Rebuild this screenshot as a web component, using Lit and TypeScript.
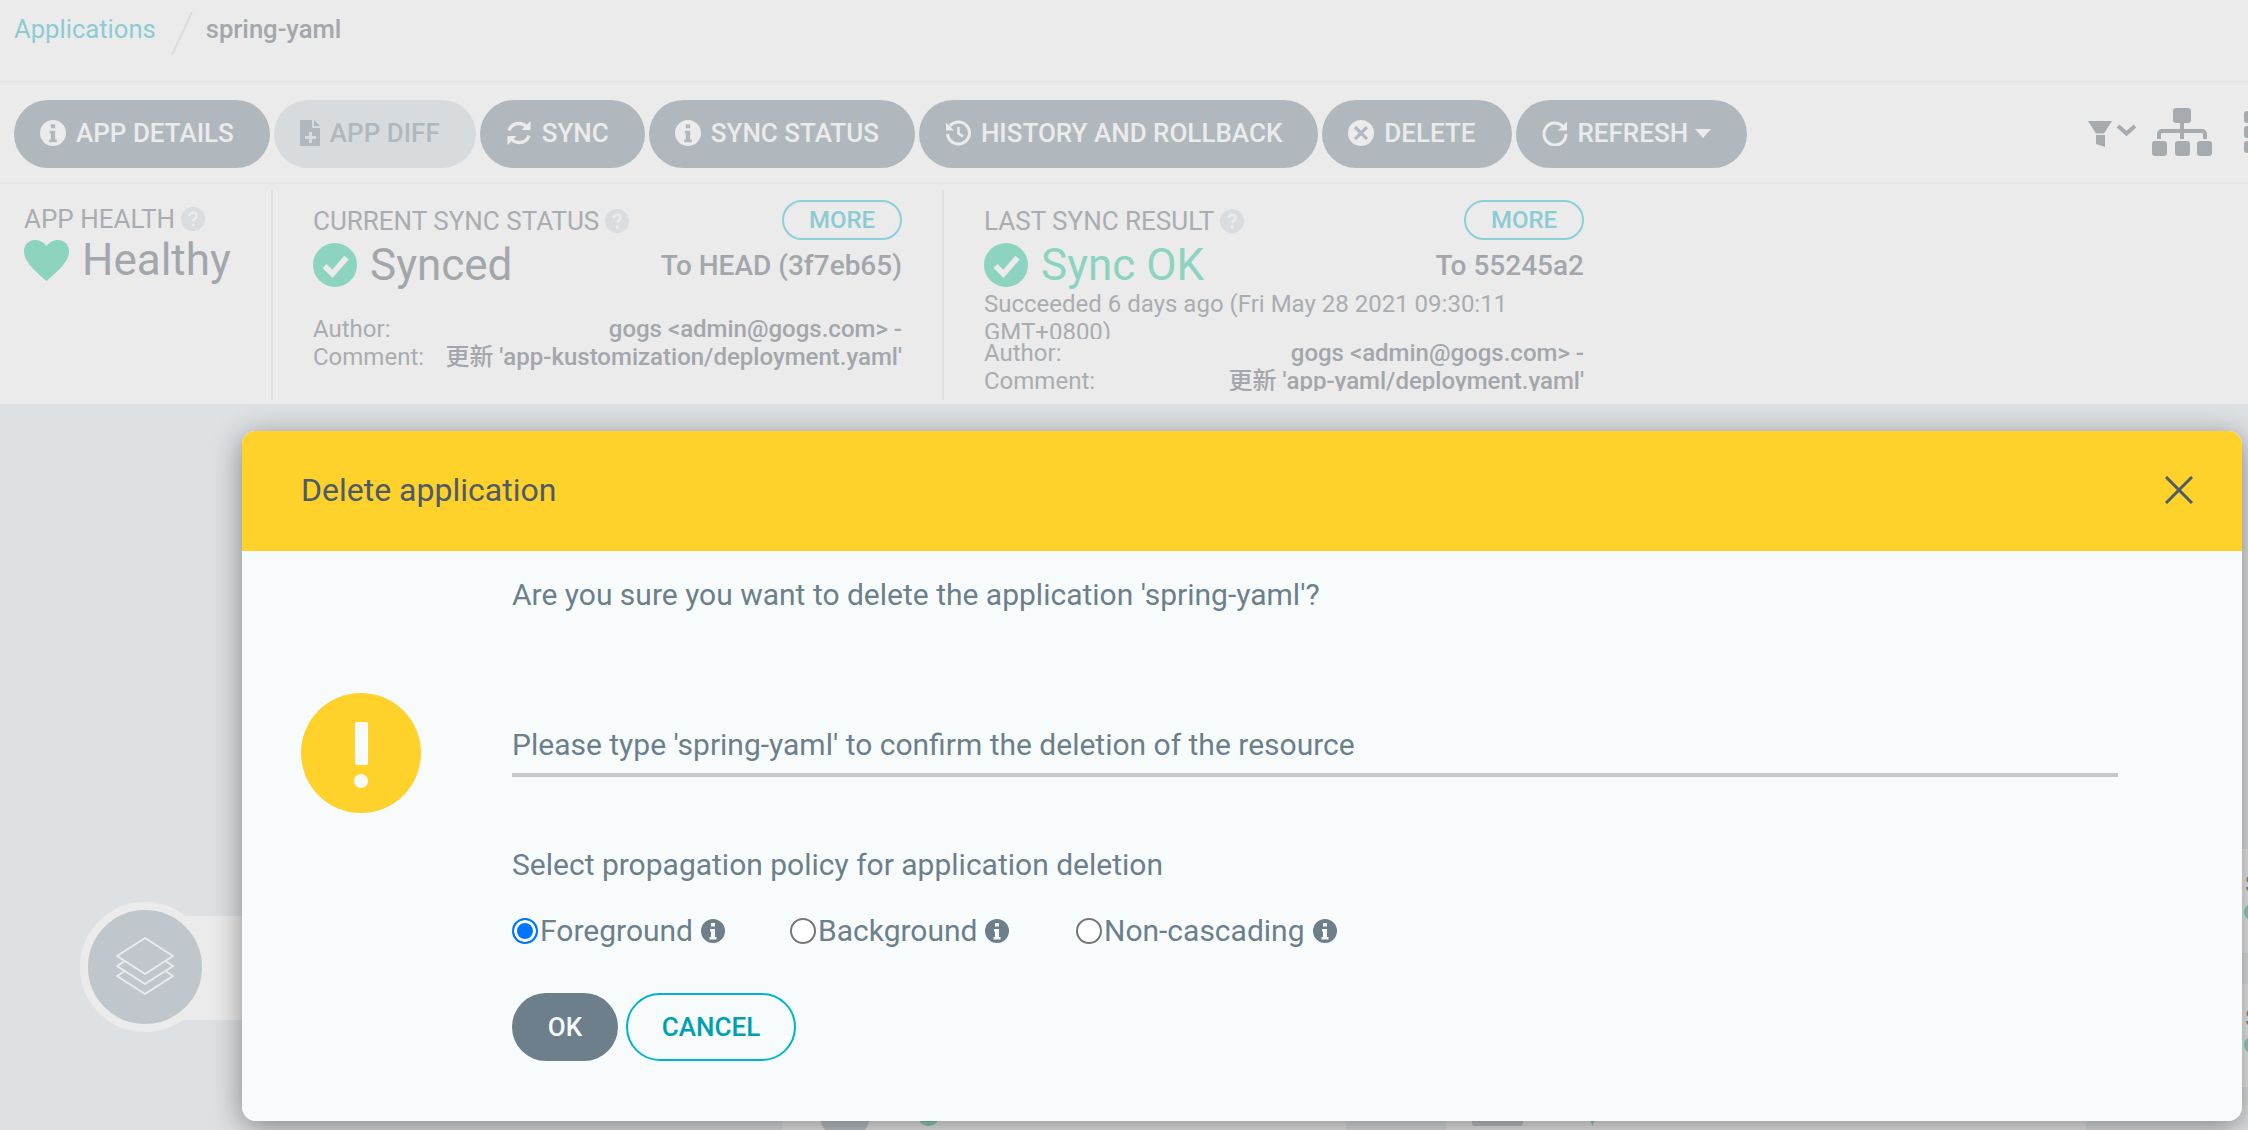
import { LitElement, html, css } from "lit";
import { customElement } from "lit/decorators.js";

const infoPath =
  "M12 0a12 12 0 1 0 0 24 12 12 0 0 0 0-24Zm-2 4h4v3.500h-4V4Zm-1 6h5v8h1.500v2.500h-7V18H10v-5.500H9V10Z";
const infoIcon = html`<svg viewBox="0 0 24 24" class="ico"><path fill-rule="evenodd" fill="currentColor" d=${infoPath} /></svg>`;
const helpIcon = html`<svg viewBox="0 0 24 24" class="help">
  <circle cx="12" cy="12" r="12" fill="#d9dde0" />
  <path d="M8.500 9.200c0-2 1.500-3.300 3.500-3.300s3.500 1.300 3.500 3.100c0 2.600-3.200 2.600-3.200 5" fill="none" stroke="#ebebeb" stroke-width="2.600" />
  <circle cx="12.300" cy="18" r="1.700" fill="#ebebeb" />
</svg>`;
const checkIcon = html`<svg viewBox="0 0 42 42" class="check">
  <circle cx="21" cy="21" r="21" fill="#8cd3c0" />
  <path d="M11 22l7.500 7.500L32 14" fill="none" stroke="#ebebeb" stroke-width="5.500" />
</svg>`;

const buttons = [
  { label: "APP DETAILS", icon: infoIcon },
  {
    label: "APP DIFF",
    disabled: true,
    icon: html`<svg viewBox="0 0 20 26" class="ico narrow"><path fill="currentColor" fill-rule="evenodd" d="M0 0h12v8h8v18H0V0Zm14 0l6 6h-6V0ZM9 12v4H5v3h4v4h3v-4h4v-3h-4v-4H9Z" /></svg>`,
  },
  {
    label: "SYNC",
    icon: html`<svg viewBox="0 0 26 26" class="ico">
      <path fill="none" stroke="currentColor" stroke-width="3.400" d="M3 10.500C4.500 6 8.500 3.500 13 3.500c3.500 0 6 1.500 8 4M23 15.500c-1.500 4.500-5.500 7-10 7-3.500 0-6-1.500-8-4" />
      <path fill="currentColor" d="M24.500 1v9h-9ZM1.500 25v-9h9Z" />
    </svg>`,
  },
  { label: "SYNC STATUS", icon: infoIcon },
  {
    label: "HISTORY AND ROLLBACK",
    icon: html`<svg viewBox="0 0 26 26" class="ico">
      <path fill="none" stroke="currentColor" stroke-width="3" d="M5 6a11 11 0 1 1-2.500 8" />
      <path fill="currentColor" d="M1 2.500l8 8H1Z" />
      <path fill="none" stroke="currentColor" stroke-width="2.600" d="M13.500 7v6.500l4.500 3" />
    </svg>`,
  },
  {
    label: "DELETE",
    icon: html`<svg viewBox="0 0 24 24" class="ico"><path fill="currentColor" fill-rule="evenodd" d="M12 0a12 12 0 1 0 0 24 12 12 0 0 0 0-24Zm-4.500 5.500L12 10l4.500-4.500 2 2L14 12l4.500 4.500-2 2L12 14l-4.500 4.500-2-2L10 12 5.500 7.500l2-2Z" /></svg>`,
  },
  {
    label: "REFRESH",
    caret: true,
    icon: html`<svg viewBox="0 0 26 26" class="ico">
      <path fill="none" stroke="currentColor" stroke-width="3" d="M21 6.500A11 11 0 1 0 24 14" />
      <path fill="currentColor" d="M25 1.500v9h-9Z" />
    </svg>`,
  },
];

@customElement("app-root")
export class AppRoot extends LitElement {
  static styles = css`
    :host {
      display: block;
      position: relative;
      width: 2248px;
      height: 1130px;
      overflow: hidden;
      background: #dee1e3;
      font-family: Roboto, "Noto Sans CJK SC", sans-serif;
    }
    .top {
      height: 83px;
      box-sizing: border-box;
      background: #ebebeb;
      border-bottom: 2px solid #e6e6e6;
      display: flex;
      align-items: flex-start;
      padding: 11px 0 0 14px;
      font-size: 25.600px;
      line-height: 36px;
    }
    .crumb {
      color: #8ccbd4;
    }
    .slash {
      width: 2px;
      height: 47px;
      margin: -1px 23px 0 25px;
      background: #dcdcdc;
      transform: rotate(25deg);
    }
    .current {
      color: #a3a7ab;
      font-weight: 500;
    }
    .toolbar {
      height: 101px;
      box-sizing: border-box;
      background: #ebebeb;
      border-bottom: 2px solid #e6e6e6;
      display: flex;
      align-items: center;
      padding: 3px 0 0 14px;
      gap: 4px;
    }
    .btn {
      height: 68px;
      border-radius: 34px;
      background: #b1b8bd;
      color: #ebebeb;
      display: flex;
      align-items: center;
      box-sizing: border-box;
      padding: 0 36px 2px 26px;
      gap: 10px;
      font-size: 26px;
      font-weight: 500;
      white-space: nowrap;
    }
    .btn.disabled {
      background: #d7dbde;
      color: #b1b8bd;
    }
    .ico {
      width: 26px;
      height: 26px;
      flex: none;
    }
    .ico.narrow {
      width: 20px;
    }
    .caret {
      width: 0;
      height: 0;
      border: 8px solid transparent;
      border-top: 9px solid #ebebeb;
      border-bottom: 0;
      margin-left: -3px;
    }
    .tools {
      margin-left: auto;
      margin-right: -14px;
      margin-top: -4px;
      display: flex;
      align-items: center;
      gap: 16px;
    }
    .funnel {
      margin-top: 4px;
    }
    .grid {
      display: flex;
      flex-direction: column;
      gap: 3px;
      margin-left: 16px;
    }
    .grid span {
      display: block;
      width: 18px;
      height: 12px;
      border-radius: 3px;
      background: #a6abaf;
    }
    .info {
      height: 220px;
      box-sizing: border-box;
      background: #ebebeb;
      display: flex;
      padding: 6px 0 0;
      position: relative;
      z-index: 2;
      color: #a3a7ab;
    }
    .panel {
      box-sizing: border-box;
      height: 210px;
      border-right: 2px solid #e0e0e0;
      overflow: hidden;
    }
    .health {
      width: 273px;
      padding: 12px 0 0 24px;
    }
    .sync {
      width: 671px;
      padding: 10px 40px 0 40px;
    }
    .result {
      width: 700px;
      padding: 10px 0 0 40px;
      border-right: 0;
    }
    .inner {
      width: 600px;
      height: 191px;
      overflow: hidden;
    }
    .label {
      font-size: 26px;
      line-height: 30px;
      color: #a9adb1;
      display: flex;
      align-items: center;
      gap: 6px;
      padding-top: 2px;
    }
    .help {
      width: 24px;
      height: 24px;
    }
    .head {
      height: 40px;
      display: flex;
      justify-content: space-between;
      align-items: center;
    }
    .more {
      width: 120px;
      height: 40px;
      box-sizing: border-box;
      border: 2px solid #8cd0d8;
      border-radius: 20px;
      color: #8ccbd4;
      font-size: 24px;
      font-weight: 500;
      display: flex;
      align-items: center;
      justify-content: center;
    }
    .status {
      display: flex;
      align-items: center;
      font-size: 44px;
      line-height: 44px;
      color: #a3a7ab;
      gap: 13px;
      margin-top: 1px;
    }
    .health .status {
      margin-top: 4px;
    }
    .status.good {
      color: #8cd3c0;
    }
    .check {
      width: 44px;
      height: 44px;
    }
    .heart {
      width: 45px;
      height: 41px;
    }
    .rev {
      margin-left: auto;
      padding-top: 3px;
      color: #a3a7ab;
      font-size: 28px;
      font-weight: 500;
    }
    .row {
      display: flex;
      justify-content: space-between;
      font-size: 24px;
      line-height: 28px;
      white-space: nowrap;
    }
    .row span:first-child {
      color: #a9adb1;
    }
    .row span:last-child {
      font-weight: 500;
    }
    .gap {
      height: 27px;
    }
    .when {
      font-size: 24px;
      line-height: 28px;
      color: #a9adb1;
      margin-top: 2px;
      height: 49px;
      overflow: hidden;
    }
    .canvas {
      position: absolute;
      left: 0;
      top: 0;
      width: 2248px;
      height: 1130px;
    }
    .card {
      position: absolute;
      background: #ebebeb;
      color: #8a8e92;
      font-size: 24px;
    }
    .node {
      position: absolute;
      background: #bfc7cd;
    }
    .root {
      position: absolute;
      left: 80px;
      top: 902px;
      width: 130px;
      height: 130px;
      box-sizing: border-box;
      border-radius: 50%;
      background: #bfc7cd;
      border: 8px solid #ebebeb;
    }
    .shadow {
      position: absolute;
      left: 242px;
      top: 431px;
      width: 2000px;
      height: 690px;
      border-radius: 14px;
      box-shadow: 0 6px 30px rgba(0, 0, 0, 0.42);
    }
    .modal {
      position: absolute;
      z-index: 3;
      left: 242px;
      top: 431px;
      width: 2000px;
      height: 690px;
      border-radius: 14px;
      overflow: hidden;
      background: #f7fbfc;
    }
    .modal-head {
      height: 120px;
      box-sizing: border-box;
      background: #ffd12b;
      color: #4d5b69;
      font-size: 32px;
      display: flex;
      align-items: center;
      justify-content: space-between;
      padding: 0 49px 2px 59px;
    }
    .modal-body {
      display: flex;
      padding: 0 0 0 59px;
      color: #6d7f8b;
      font-size: 30px;
    }
    .warn {
      width: 120px;
      height: 120px;
      margin-top: 142px;
      flex: none;
    }
    .form {
      margin-left: 91px;
      width: 1606px;
    }
    .question {
      margin-top: 27px;
      line-height: 34px;
    }
    .field {
      margin-top: 115px;
      height: 34px;
      line-height: 36px;
      border-bottom: 4px solid #c8c8c8;
      padding-bottom: 12px;
    }
    .policy {
      margin-top: 71px;
      line-height: 34px;
    }
    .radios {
      display: flex;
      margin-top: 32px;
      line-height: 34px;
      align-items: center;
    }
    .radio {
      display: flex;
      align-items: center;
    }
    .dot {
      width: 26px;
      height: 26px;
      box-sizing: border-box;
      border-radius: 50%;
      border: 2px solid #767676;
      background: #fff;
      margin-right: 2px;
    }
    .dot.on {
      border-color: #0075ff;
      box-shadow: inset 0 0 0 3px #fff;
      background: #0075ff;
    }
    .radio-info {
      width: 24px;
      height: 24px;
      margin-left: 8px;
    }
    .actions {
      display: flex;
      gap: 8px;
      margin-top: 45px;
    }
    .ok-btn,
    .cancel-btn {
      height: 68px;
      box-sizing: border-box;
      border-radius: 34px;
      display: flex;
      align-items: center;
      justify-content: center;
      font-size: 26px;
      font-weight: 500;
    }
    .ok-btn {
      width: 106px;
      background: #6d7f8b;
      color: #f7fbfc;
    }
    .cancel-btn {
      width: 170px;
      border: 2px solid #00b4c8;
      color: #00a0b0;
    }
  `;

  private renderRadio(label: string, on: boolean, width: number) {
    return html`<div class="radio" style="width:${width}px">
      <span class="dot ${on ? "on" : ""}"></span><span>${label}</span>
      <svg viewBox="0 0 24 24" class="radio-info"><path fill-rule="evenodd" fill="#6d7f8b" d=${infoPath} /></svg>
    </div>`;
  }

  private renderGraph() {
    return html`<div class="canvas">
      <div class="card" style="left:120px;top:916px;width:200px;height:104px"></div>
      <div class="root">
        <svg width="114" height="114" viewBox="0 0 114 114">
          <g fill="#bfc7cd" stroke="#ebebeb" stroke-width="2" stroke-linejoin="round">
            <path d="M57 84L29 66l28-18 28 18Z" />
            <path d="M57 74L29 56l28-18 28 18Z" />
            <path d="M57 64L29 46l28-18 28 18Z" />
          </g>
        </svg>
      </div>
      <div class="card" style="left:782px;top:1100px;width:564px;height:40px"></div>
      <div class="node" style="left:820px;top:1090px;width:50px;height:50px;border-radius:50%"></div>
      <div class="node" style="left:917px;top:1100px;width:23px;height:26px;border-radius:50%;background:#8cd3c0"></div>
      <div class="card" style="left:1446px;top:1100px;width:640px;height:40px"></div>
      <div class="node" style="left:1472px;top:1100px;width:51px;height:26px;border-radius:3px"></div>
      <div class="node" style="left:1586px;top:1110px;width:13px;height:16px;background:#8cd3c0;clip-path:polygon(0 0,100% 0,50% 100%)"></div>
      <div class="card" style="left:2100px;top:849px;width:148px;height:104px"></div>
      <div class="card" style="left:2100px;top:984px;width:148px;height:103px"></div>
      <div class="card" style="left:2245px;top:870px;width:3px;height:30px;overflow:hidden">S</div>
      <div class="node" style="left:2244px;top:904px;width:16px;height:16px;border-radius:50%;background:#8cd3c0"></div>
      <div class="card" style="left:2245px;top:1004px;width:3px;height:30px;overflow:hidden">S</div>
      <div class="node" style="left:2244px;top:1037px;width:16px;height:16px;border-radius:50%;background:#8cd3c0"></div>
    </div>`;
  }

  render() {
    return html`
      <div class="top">
        <span class="crumb">Applications</span><span class="slash"></span><span class="current">spring-yaml</span>
      </div>
      <div class="toolbar">
        ${buttons.map(
          (b) => html`<div class="btn ${b.disabled ? "disabled" : ""}">
            ${b.icon}<span>${b.label}</span>${b.caret ? html`<span class="caret"></span>` : ""}
          </div>`,
        )}
        <div class="tools">
          <svg class="funnel" width="48" height="26" viewBox="0 0 48 26">
            <path fill="#a6abaf" d="M0 0h24l-8 12.500H8Z" />
            <path fill="#a6abaf" d="M8 14h9v12l-9-3Z" />
            <path fill="none" stroke="#a6abaf" stroke-width="4" d="M30 5l8.500 7.500L47 5" />
          </svg>
          <svg width="60" height="48" viewBox="0 0 60 48">
            <rect x="21" y="0" width="18" height="15" rx="3" fill="#a6abaf" />
            <rect x="0" y="33" width="15" height="15" rx="3" fill="#a6abaf" />
            <rect x="23" y="33" width="15" height="15" rx="3" fill="#a6abaf" />
            <rect x="45" y="33" width="15" height="15" rx="3" fill="#a6abaf" />
            <path d="M7 31v-5a3 3 0 0 1 3-3h40a3 3 0 0 1 3 3v5M30 14v17" fill="none" stroke="#a6abaf" stroke-width="4" />
          </svg>
          <div class="grid"><span></span><span></span><span></span></div>
        </div>
      </div>
      <div class="info">
        <div class="panel health">
          <div class="label">APP HEALTH ${helpIcon}</div>
          <div class="status">
            <svg class="heart" viewBox="0 0 44 40"><path fill="#8cd3c0" d="M22 40C8 28 0 20 0 11 0 4 5 0 11 0c4.500 0 8.500 2.500 11 6 2.500-3.500 6.500-6 11-6 6 0 11 4 11 11 0 9-8 17-22 29Z" /></svg>
            <span>Healthy</span>
          </div>
        </div>
        <div class="panel sync">
          <div class="head"><div class="label">CURRENT SYNC STATUS ${helpIcon}</div><div class="more">MORE</div></div>
          <div class="status">${checkIcon}<span>Synced</span><span class="rev">To HEAD (3f7eb65)</span></div>
          <div class="gap"></div>
          <div class="row"><span>Author:</span><span>gogs &lt;admin@gogs.com&gt; -</span></div>
          <div class="row"><span>Comment:</span><span>更新 'app-kustomization/deployment.yaml'</span></div>
        </div>
        <div class="panel result">
          <div class="inner">
            <div class="head"><div class="label">LAST SYNC RESULT ${helpIcon}</div><div class="more">MORE</div></div>
            <div class="status good">${checkIcon}<span>Sync OK</span><span class="rev">To 55245a2</span></div>
            <div class="when">Succeeded 6 days ago (Fri May 28 2021 09:30:11 GMT+0800)</div>
            <div class="row"><span>Author:</span><span>gogs &lt;admin@gogs.com&gt; -</span></div>
            <div class="row"><span>Comment:</span><span>更新 'app-yaml/deployment.yaml'</span></div>
          </div>
        </div>
      </div>
      ${this.renderGraph()}
      <div class="shadow"></div>
      <div class="modal">
        <div class="modal-head">
          <span>Delete application</span>
          <svg width="28" height="28" viewBox="0 0 28 28"><path d="M1 1l26 26M27 1L1 27" stroke="#4d5b69" stroke-width="3" /></svg>
        </div>
        <div class="modal-body">
          <svg class="warn" viewBox="0 0 120 120">
            <circle cx="60" cy="60" r="60" fill="#ffd12b" />
            <rect x="54" y="29" width="13" height="43" rx="2" fill="#f7fbfc" />
            <circle cx="60" cy="88" r="7" fill="#f7fbfc" />
          </svg>
          <div class="form">
            <div class="question">Are you sure you want to delete the application 'spring-yaml'?</div>
            <div class="field">Please type 'spring-yaml' to confirm the deletion of the resource</div>
            <div class="policy">Select propagation policy for application deletion</div>
            <div class="radios">
              ${this.renderRadio("Foreground", true, 278)}
              ${this.renderRadio("Background", false, 286)}
              ${this.renderRadio("Non-cascading", false, 300)}
            </div>
            <div class="actions">
              <div class="ok-btn">OK</div>
              <div class="cancel-btn">CANCEL</div>
            </div>
          </div>
        </div>
      </div>
    `;
  }
}
